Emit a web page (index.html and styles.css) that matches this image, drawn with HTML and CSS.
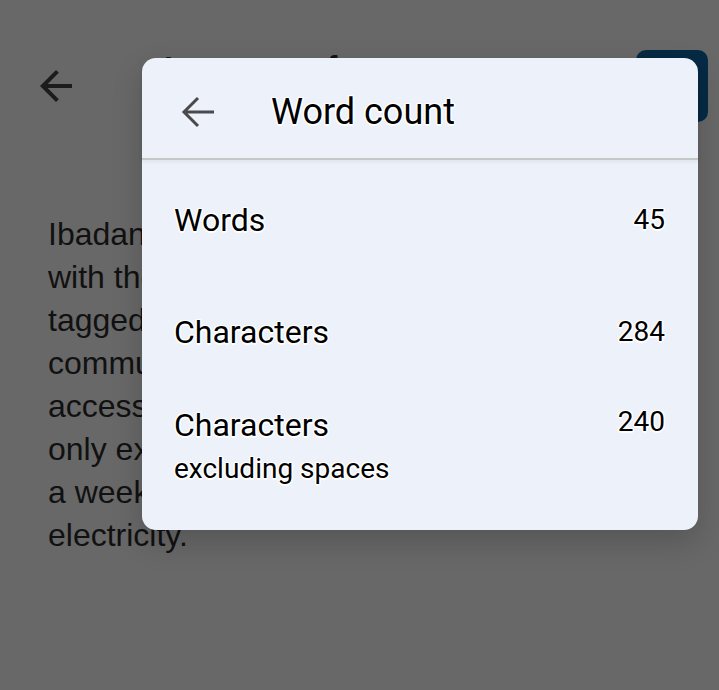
FILE: index.html
```html
<!DOCTYPE html>
<html lang="en">
<head>
    <meta charset="UTF-8">
    <meta name="viewport" content="width=device-width, initial-scale=1.0">
    <title>Word count</title>
    <link rel="stylesheet" href="styles.css">
</head>
<body>
    <div class="page">
        <div class="top-bar">
            <svg class="page-back" viewBox="0 0 24 24"><path d="M20 11H7.83l5.59-5.59L12 4l-8 8 8 8 1.41-1.41L7.83 13H20v-2z"/></svg>
            <h1 class="doc-title">Amount of power</h1>
            <div class="doc-action"></div>
        </div>
        <p class="doc-text">
            Ibadan residents are grappling<br>
            with the epileptic power supply<br>
            tagged as one of the worst in the<br>
            community, as many have no<br>
            access to electricity, with some<br>
            only experiencing four hours<br>
            a week of steady public<br>
            electricity.
        </p>
    </div>

    <!-- Ventana de conteo -->
    <div class="dialog">
        <div class="dialog-header">
            <svg class="dialog-back" viewBox="0 0 24 24"><path d="M20 12H5M12 5l-7 7 7 7"/></svg>
            <h2 class="dialog-title">Word count</h2>
        </div>
        <div class="dialog-body">
            <div class="stat-row stat-words">
                <span class="stat-label">Words</span>
                <span class="stat-value">45</span>
            </div>
            <div class="stat-row stat-chars">
                <span class="stat-label">Characters</span>
                <span class="stat-value">284</span>
            </div>
            <div class="stat-row">
                <div>
                    <span class="stat-label">Characters</span>
                    <span class="stat-sub">excluding spaces</span>
                </div>
                <span class="stat-value stat-value-top">240</span>
            </div>
        </div>
    </div>
</body>
</html>
```

FILE: styles.css
```css
body {
    margin: 0;
    background-color: #686868;
    font-family: "Liberation Sans", Arial, sans-serif;
    color: #111;
    overflow: hidden;
}
.page {
    height: 690px;
}
.top-bar {
    display: flex;
    align-items: flex-start;
    padding: 47px 11px 0 32px;
}
.page-back {
    width: 48px;
    height: 48px;
    margin-top: 15px;
    fill: #1c1c1c;
}
.doc-title {
    margin: 0 0 0 75px;
    font-size: 40px;
    font-weight: normal;
    line-height: 48px;
    white-space: nowrap;
}
.doc-action {
    width: 72px;
    height: 72px;
    margin-left: auto;
    margin-top: 3px;
    background-color: #062a44;
    border-radius: 10px;
}
.doc-text {
    margin: 0;
    padding: 0 48px;
    margin-top: 91px;
    font-size: 32px;
    line-height: 43px;
    white-space: nowrap;
}

/* Ventana flotante */
.dialog {
    position: absolute;
    left: 142px;
    top: 58px;
    width: 556px;
    height: 472px;
    background-color: #edf1fa;
    border-radius: 14px;
    box-shadow: 0 12px 30px rgba(0, 0, 0, 0.18);
    font-family: Roboto, "Noto Sans", sans-serif;
    color: #000;
    text-shadow: 1px 1px 0 #fff, -1px -1px 0 #fff, 1px -1px 0 #fff, -1px 1px 0 #fff,
                 0 1.5px 0 #fff, 0 -1.5px 0 #fff, 1.5px 0 0 #fff, -1.5px 0 0 #fff;
}
.dialog-header {
    display: flex;
    align-items: center;
    height: 48px;
    padding: 30px 0 22px 32px;
    border-bottom: 2px solid #c6c8c8;
    box-shadow: 0 2px 4px rgba(0, 0, 0, 0.06);
}
.dialog-back {
    width: 48px;
    height: 48px;
    fill: none;
    stroke: #4a4a4a;
    stroke-width: 1.5;
}
.dialog-title {
    margin: 0 0 0 49px;
    font-size: 36px;
    font-weight: normal;
    line-height: 44px;
}
.dialog-body {
    padding: 40px 33px 0 32px;
}
.stat-row {
    display: flex;
    justify-content: space-between;
    align-items: flex-start;
}
.stat-words {
    margin-bottom: 72px;
}
.stat-chars {
    margin-bottom: 53px;
}
.stat-label {
    display: block;
    font-size: 32px;
    line-height: 40px;
}
.stat-sub {
    display: block;
    margin-top: 8px;
    font-size: 28px;
    line-height: 32px;
}
.stat-value {
    font-size: 28px;
    line-height: 40px;
}
.stat-value-top {
    margin-top: -3px;
}
```
